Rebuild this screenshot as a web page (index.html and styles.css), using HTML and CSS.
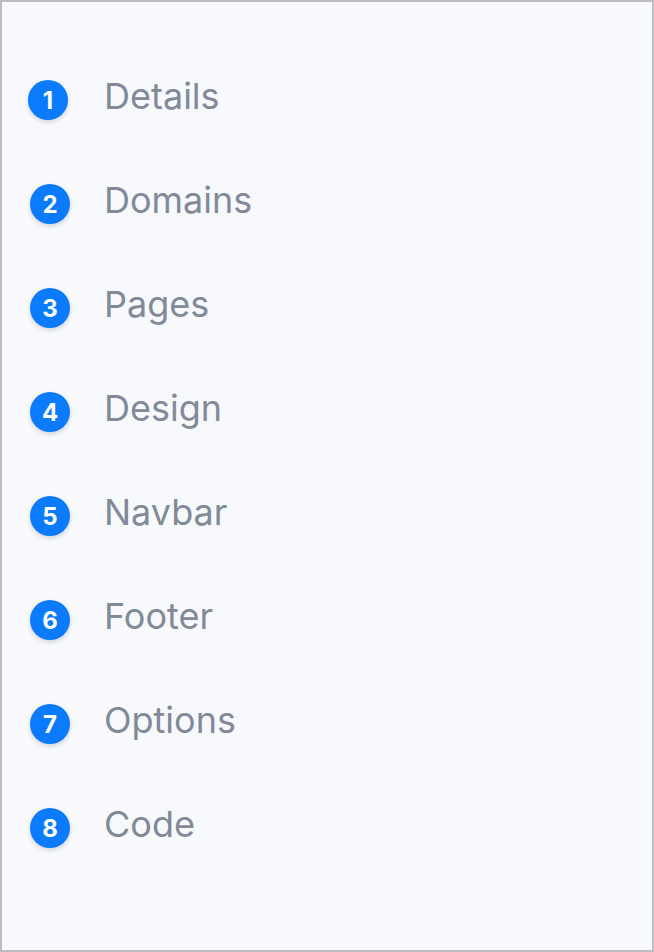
FILE: index.html
```html
<!DOCTYPE html>
<html lang="en">
<head>
<meta charset="utf-8">
<title>Steps</title>
<link rel="stylesheet" href="styles.css">
</head>
<body>
<div class="panel">
  <ol class="steps">
    <li class="step step--first"><span class="num">1</span><span class="label">Details</span></li>
    <li class="step"><span class="num">2</span><span class="label">Domains</span></li>
    <li class="step"><span class="num">3</span><span class="label">Pages</span></li>
    <li class="step"><span class="num">4</span><span class="label">Design</span></li>
    <li class="step"><span class="num">5</span><span class="label">Navbar</span></li>
    <li class="step"><span class="num">6</span><span class="label">Footer</span></li>
    <li class="step"><span class="num">7</span><span class="label">Options</span></li>
    <li class="step"><span class="num">8</span><span class="label">Code</span></li>
  </ol>
</div>
</body>
</html>
```
FILE: styles.css
```css
html, body {
  margin: 0;
  padding: 0;
}
body {
  font-family: Inter, "Noto Sans", sans-serif;
}
.panel {
  box-sizing: border-box;
  width: 654px;
  height: 952px;
  border: 2px solid #bdbdc1;
  background: #f8f9fd;
}
.steps {
  list-style: none;
  margin: 0;
  padding: 46px 0 0 0;
}
.step {
  display: flex;
  align-items: center;
  height: 104px;
  padding-left: 28px;
}
.step--first {
  padding-left: 26px;
}
.step--first .label {
  margin-left: 36px;
}
.num {
  flex: none;
  width: 40px;
  height: 40px;
  border-radius: 50%;
  background: #0a7bff;
  color: #fff;
  font-size: 24px;
  font-weight: 700;
  display: flex;
  align-items: center;
  justify-content: center;
  box-shadow: 0 2px 4px rgba(20, 40, 80, 0.18);
}
.label {
  margin-left: 34px;
  margin-bottom: 6px;
  font-size: 36px;
  line-height: 1.2;
  color: #808a99;
  font-weight: 400;
}
```
